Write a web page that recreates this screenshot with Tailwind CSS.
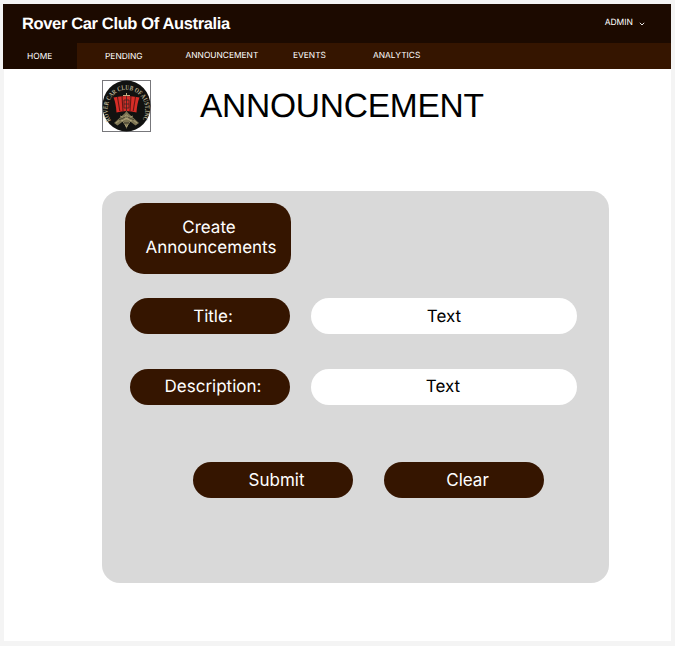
<!DOCTYPE html>
<html lang="en">
<head>
<meta charset="utf-8">
<title>Rover Car Club Of Australia</title>
<script src="https://cdn.jsdelivr.net/npm/@tailwindcss/browser@4"></script>
</head>
<body class="h-[646px] w-[675px] overflow-hidden bg-[#f4f4f4] pt-1 font-['Inter',sans-serif] antialiased [text-rendering:geometricPrecision]">
<div class="ml-1 h-[637px] w-[666.5px] bg-white">
  <header class="-ml-[1.5px] h-[65px] w-[668px] bg-[#351500] text-white">
    <div class="flex h-[39px] items-center justify-between bg-[#1c0a00] pr-[25.5px] pl-[19.5px]">
      <div class="pt-px font-['Liberation_Sans',sans-serif] text-[16.5px] leading-5 font-bold tracking-[-0.36px] whitespace-nowrap">Rover Car Club Of Australia</div>
      <div class="flex items-center gap-[6px] text-[8.5px]">
        <span>ADMIN</span>
        <svg class="h-[4px] w-[6px]" viewBox="0 0 6 4" fill="none" stroke="white" stroke-width=".9"><path d="M.8.8 3 3 5.200.8"/></svg>
      </div>
    </div>
    <nav class="grid h-[26px] grid-cols-[74.5px_94px_102px_73px_1fr] items-center text-[8.4px] whitespace-nowrap">
      <a class="flex h-full items-center bg-[#1c0a00] pt-[2px] pl-[24.5px]">HOME</a>
      <a class="pt-[2px] pl-[28px]">PENDING</a>
      <a class="pt-[1px] pl-[14.500px]">ANNOUNCEMENT</a>
      <a class="pt-[1px] pl-[20px]">EVENTS</a>
      <a class="pt-[1px] pl-[27px]">ANALYTICS</a>
    </nav>
  </header>
  <div class="flex h-[122px] pt-[11px] pl-[98px]">
    <svg class="h-[52px] w-[49px] shrink-0" viewBox="0 0 49 52">
      <defs><path id="ring" d="M9 40.500A18.800 19.600 0 1 1 40 40.500"/></defs>
      <rect x=".5" y=".5" width="48" height="51" fill="#fff" stroke="#77777b"/>
      <ellipse cx="24.500" cy="26" rx="24" ry="25.500" fill="#111210"/>
      <text font-family="Liberation Serif" font-weight="bold" font-size="6.800" fill="#b8b092"><textPath href="#ring" textLength="82" lengthAdjust="spacingAndGlyphs">ROVER CAR CLUB OF AUST.INC</textPath></text>
      <path d="M24.500 13v24M21 15.500h7" stroke="#c2ae82" stroke-width="1"/>
      <path d="M11.500 17.500q13-3 26 0-2.500 6-3 15-10-3-20 0-.5-9-3-15Z" fill="#d62d27"/>
      <path d="M15.500 17l2.300 14M20 16l1 15M29 16l-1 15M33.500 17l-2.300 14" stroke="#641713" stroke-width="1.100"/>
      <path d="M22 20h5v8h-5ZM22 24h5M24.500 16v20" fill="none" stroke="#3e2422" stroke-width=".8"/>
      <path d="M12 43 22.500 33.500 24.500 31l2 2.500L37 43l-3.500 2.500-6-4.500-3 8-3-8-6 4.500Z" fill="#7d7553"/>
      <path d="m14 43 10.500-8L35 43M20 40l4.500 7 4.500-7M18 36l12 5M31 36l-12 5" fill="none" stroke="#b8ac80" stroke-width=".8"/>
      <path d="m17 40 6-3M26 37l6 3M22 43h5" stroke="#272519" stroke-width=".8"/>
    </svg>
    <h1 class="ml-[49px] pt-[7px] font-['Liberation_Sans',sans-serif] text-[33.500px] leading-10 tracking-[-0.24px] text-black">ANNOUNCEMENT</h1>
  </div>
  <main class="ml-[97.5px] h-[391.5px] w-[507px] rounded-[18px] bg-[#d9d9d9] pt-[11.5px] pl-[23px] text-[17px] leading-5 text-white">
    <div class="flex h-[71px] w-[166px] items-center justify-center rounded-[19px] bg-[#351500] pb-[1px] pl-[7px] text-center"><div><span class="relative -left-[2px]">Create</span><br>Announcements</div></div>
    <div class="mt-[24.500px] ml-[5px] grid w-[447px] grid-cols-[160px_266px] gap-x-[21.500px] gap-y-[34.500px] text-center">
      <div class="h-9 rounded-full bg-[#351500] pt-[8.5px] pl-[7px]">Title:</div>
      <div class="h-9 rounded-full bg-white pt-[8.5px] text-black">Text</div>
      <div class="h-9 rounded-full bg-[#351500] pt-[8px] pl-[7px]">Description:</div>
      <div class="h-9 rounded-full bg-white pt-[8px] pr-[2px] text-black">Text</div>
    </div>
    <div class="mt-[57.5px] ml-[68.500px] flex gap-[31px] text-center">
      <button class="h-9 w-[160px] rounded-full bg-[#351500] pb-px pl-[7px]">Submit</button>
      <button class="h-9 w-[160px] rounded-full bg-[#351500] pb-px pl-[7px]">Clear</button>
    </div>
  </main>
</div>
</body>
</html>
